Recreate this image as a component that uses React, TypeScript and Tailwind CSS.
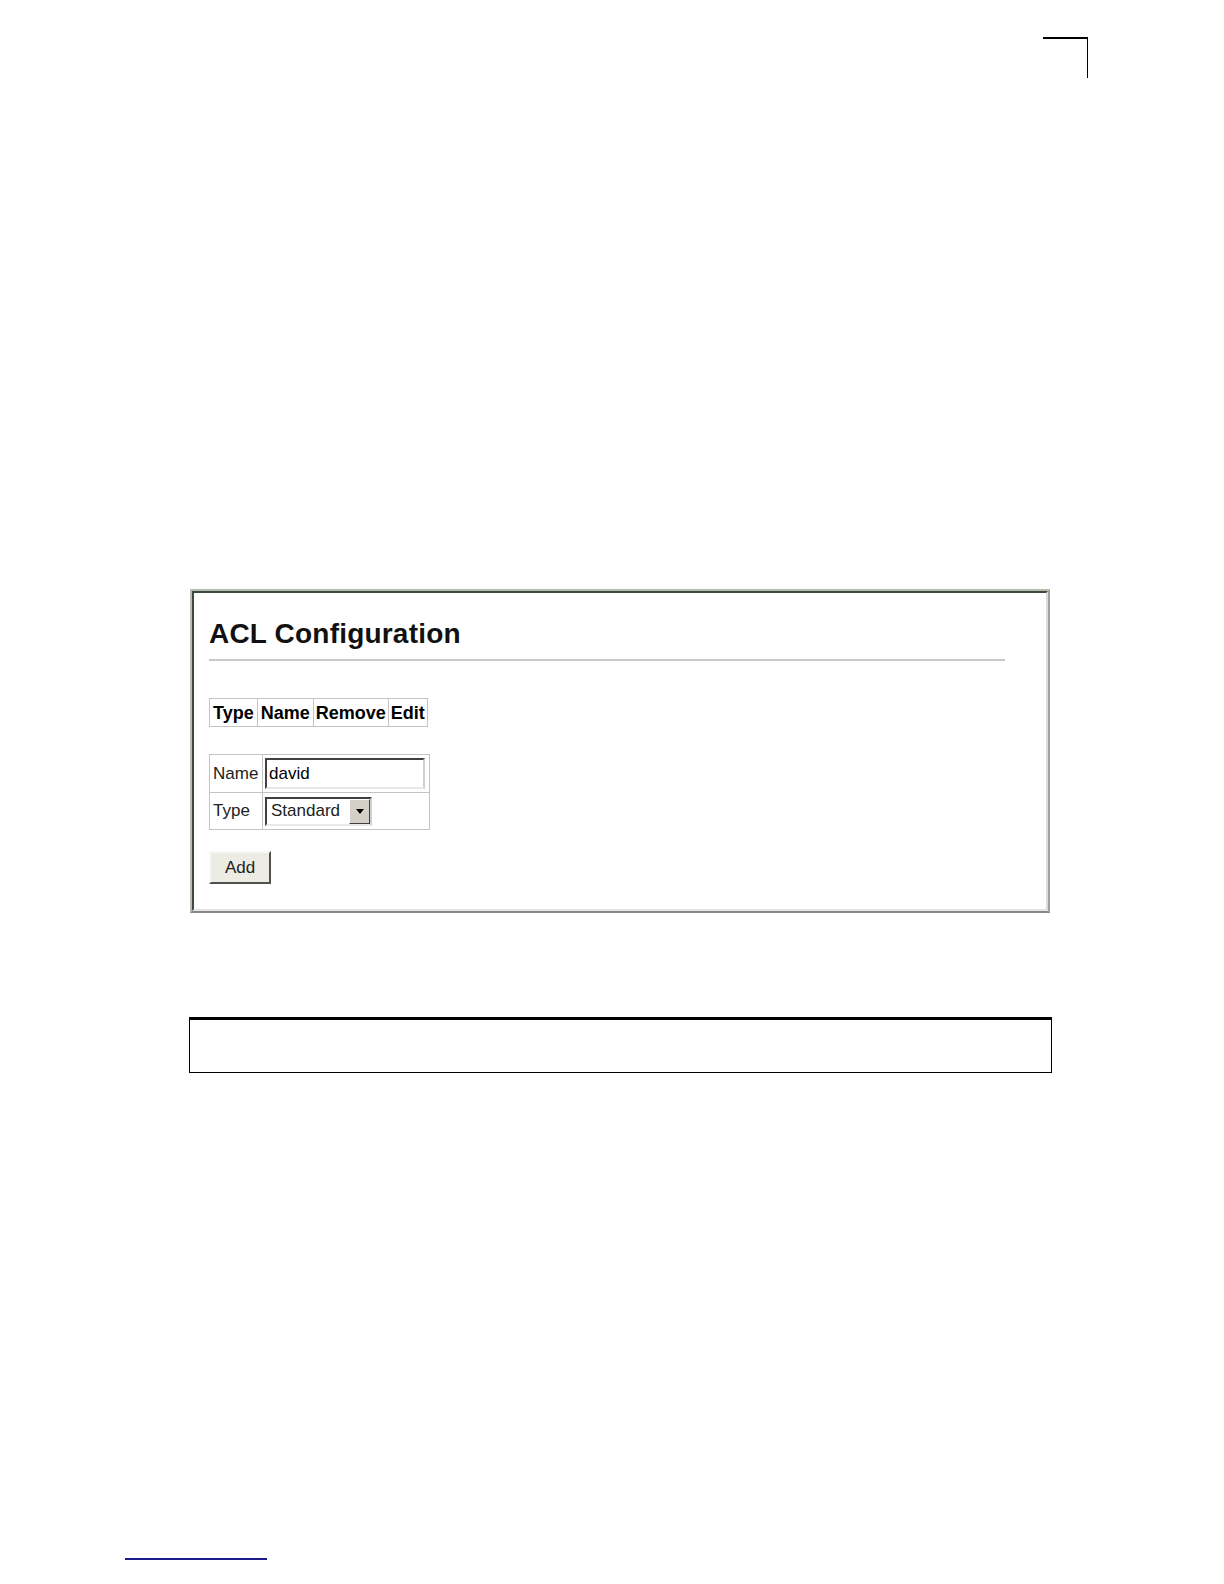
import React from "react";

export default function App() {
  const f = { fontFamily: '"Liberation Sans", Arial, sans-serif' };
  return (
    <div className="w-[1224px] h-[1584px] bg-white flex flex-col relative" style={f}>
      <div className="pt-[37px] flex justify-end pr-[136px]">
        <div className="w-[45px] h-[41px] border-t-2 border-r border-black" />
      </div>

      <div className="mt-[511px] ml-[190px] w-[860px] h-[324px] border-2 border-t-[#b8bcb0] border-l-[#b8bcb0] border-b-[#888888] border-r-[#a0a0a0]">
        <div className="w-full h-full border-2 border-t-[#3c4a3c] border-l-[#3c4a3c] border-b-[#e4e4e4] border-r-[#dcdcdc] bg-white pl-[15px]">
          <div className="mt-[24px] text-[28px] leading-[34px] font-bold tracking-[0.2px] text-[#111]">ACL Configuration</div>
          <div className="mt-[8px] w-[796px] h-[2px] bg-[#c8c8c8]" />

          <table className="mt-[37px] border-collapse border border-[#b8b8b8] text-[18px] font-bold text-black">
            <tbody>
              <tr className="h-[28px]">
                <td className="border border-[#c4c4c4] px-[3px] leading-none">Type</td>
                <td className="border border-[#c4c4c4] px-[3px] leading-none">Name</td>
                <td className="border border-[#c4c4c4] px-[2px] leading-none">Remove</td>
                <td className="border border-[#c4c4c4] px-[2px] leading-none">Edit</td>
              </tr>
            </tbody>
          </table>

          <table className="mt-[27px] border-collapse border border-[#b8b8b8] text-[17px] text-[#222] w-[221px]">
            <tbody>
              <tr className="h-[38px]">
                <td className="border border-[#c4c4c4] px-[3px] w-[53px]">Name</td>
                <td className="border border-[#c4c4c4] px-[2px]">
                  <div className="w-[160px] h-[31px] border-2 border-t-[#404040] border-l-[#404040] border-b-[#e8e8e8] border-r-[#d0d0d0] flex items-center pl-[2px] text-black">
                    david
                  </div>
                </td>
              </tr>
              <tr className="h-[37px]">
                <td className="border border-[#c4c4c4] px-[3px]">Type</td>
                <td className="border border-[#c4c4c4] px-[2px]">
                  <div className="w-[107px] h-[29px] border-2 border-t-[#404040] border-l-[#404040] border-b-[#e8e8e8] border-r-[#d0d0d0] flex items-center justify-between text-[#222]">
                    <span className="pl-[4px]">Standard</span>
                    <span className="w-[21px] h-[25px] bg-[#d4d0c8] border border-t-white border-l-white border-b-[#404040] border-r-[#404040] flex items-center justify-center">
                      <svg width="8" height="5" viewBox="0 0 8 5"><path d="M0 0H8L4 5Z" fill="#000" /></svg>
                    </span>
                  </div>
                </td>
              </tr>
            </tbody>
          </table>

          <div className="mt-[21px] w-[62px] h-[33px] bg-[#ecece4] border-2 border-t-[#f8f8f8] border-l-[#f8f8f8] border-b-[#505050] border-r-[#505050] flex items-center justify-center text-[17px] text-[#222]">
            Add
          </div>
        </div>
      </div>

      <div className="mt-[104px] ml-[189px] w-[863px] h-[56px] border-t-[3px] border-x border-b border-black" />

      <div className="mt-auto mb-[24px] ml-[125px] w-[142px] h-[2px] bg-[#1c1c8c]" />
    </div>
  );
}
